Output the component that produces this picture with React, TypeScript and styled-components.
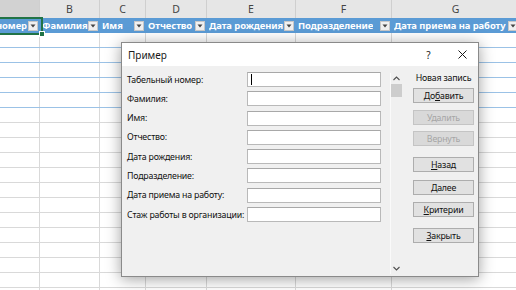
import styled, { createGlobalStyle } from 'styled-components'

const GlobalStyle = createGlobalStyle`
  html, body {
    margin: 0;
    padding: 0;
    background: #ffffff;
    overflow: hidden;
  }
`

const UI_FONT = `"Noto Sans", "Open Sans", "Liberation Sans", sans-serif`

const columns = [
  { letter: '', title: 'Табельный номер', width: 40, clipLeft: true },
  { letter: 'B', title: 'Фамилия', width: 60 },
  { letter: 'C', title: 'Имя', width: 46 },
  { letter: 'D', title: 'Отчество', width: 61 },
  { letter: 'E', title: 'Дата рождения', width: 89 },
  { letter: 'F', title: 'Подразделение', width: 96 },
  { letter: 'G', title: 'Дата приема на работу', width: 128 },
]

const fields = [
  'Табельный номер:',
  'Фамилия:',
  'Имя:',
  'Отчество:',
  'Дата рождения:',
  'Подразделение:',
  'Дата приема на работу:',
  'Стаж работы в организации:',
]

const buttons = [
  { pre: 'До', key: 'б', post: 'авить', gap: 4 },
  { pre: 'Удалить', key: '', post: '', gap: 7, disabled: true },
  { pre: 'Вернуть', key: '', post: '', gap: 6, disabled: true },
  { pre: '', key: 'Н', post: 'азад', gap: 11 },
  { pre: '', key: 'Д', post: 'алее', gap: 8 },
  { pre: '', key: 'К', post: 'ритерии', gap: 7 },
  { pre: '', key: 'З', post: 'акрыть', gap: 11 },
]

const Sheet = styled.div`
  position: relative;
  width: 516px;
  height: 290px;
  overflow: hidden;
  background: #ffffff;
`

const LettersRow = styled.div`
  display: flex;
  height: 18px;
  background: #e6e6e6;
`

const LetterCell = styled.div<{ $w: number; $selected?: boolean }>`
  flex: none;
  width: ${(p) => p.$w}px;
  box-sizing: border-box;
  border-right: 1px solid #cfcfcf;
  background: ${(p) => (p.$selected ? '#d2d2d2' : '#e6e6e6')};
  display: flex;
  align-items: center;
  justify-content: center;
  font-family: ${UI_FONT};
  font-size: 10.5px;
  color: #444444;
`

const HeaderRow = styled.div`
  display: flex;
  height: 15px;
  background: #5b9bd5;
`

const HeaderCell = styled.div<{ $w: number; $clipLeft?: boolean }>`
  flex: none;
  width: ${(p) => p.$w}px;
  box-sizing: border-box;
  display: flex;
  align-items: center;
  justify-content: ${(p) => (p.$clipLeft ? 'flex-end' : 'flex-start')};
  padding: 0 2px 0 2px;
  overflow: hidden;
`

const HeaderText = styled.span<{ $clipLeft?: boolean }>`
  flex: ${(p) => (p.$clipLeft ? 'none' : '0 1 auto')};
  min-width: 0;
  overflow: hidden;
  white-space: nowrap;
  font-family: ${UI_FONT};
  font-size: 9.4px;
  font-weight: 700;
  letter-spacing: -0.05px;
  color: #ffffff;
  line-height: 15px;
`

const FilterButton = styled.span<{ $clipLeft?: boolean }>`
  flex: none;
  margin-left: ${(p) => (p.$clipLeft ? '1px' : 'auto')};
  width: 10px;
  height: 10px;
  box-sizing: border-box;
  background: #f0f0f0;
  border: 1px solid #c8c8c8;
  display: flex;
  align-items: center;
  justify-content: center;
`

const DataRow = styled.div<{ $table?: boolean }>`
  display: flex;
  height: 15px;
  box-sizing: border-box;
  border-bottom: 1px solid ${(p) => (p.$table ? '#9bc2e6' : '#d9d9d9')};
`

const DataCell = styled.div<{ $w: number }>`
  flex: none;
  width: ${(p) => p.$w}px;
  box-sizing: border-box;
  border-right: 1px solid #d9d9d9;
`

const Selection = styled.div`
  position: absolute;
  left: -2px;
  top: 17px;
  width: 41px;
  height: 14px;
  border: 2px solid #217346;
  pointer-events: none;

  &::after {
    content: '';
    position: absolute;
    right: -4px;
    bottom: -4px;
    width: 4px;
    height: 4px;
    background: #217346;
    border: 1px solid #ffffff;
  }
`

const Dialog = styled.div`
  position: absolute;
  left: 121px;
  top: 42px;
  width: 358px;
  height: 235px;
  box-sizing: border-box;
  border: 1px solid #8a8a8a;
  background: #f0f0f0;
  box-shadow: 0 2px 14px rgba(0, 0, 0, 0.38);
  display: flex;
  flex-direction: column;
  font-family: ${UI_FONT};
  font-size: 8.8px;
  letter-spacing: -0.2px;
  color: #111111;
`

const TitleBar = styled.div`
  flex: none;
  height: 23px;
  background: #ffffff;
  display: flex;
  align-items: center;
  padding-left: 6px;
  font-size: 10px;
  letter-spacing: 0;
  color: #1a1a1a;
`

const TitleText = styled.span`
  flex: 1;
`

const TitleIcon = styled.span<{ $w: number }>`
  flex: none;
  width: ${(p) => p.$w}px;
  display: flex;
  align-items: center;
  justify-content: center;
  font-size: 10px;
`

const Body = styled.div`
  flex: 1;
  display: flex;
  padding: 6px 4px 2px 5px;
`

const Fields = styled.div`
  flex: none;
  display: grid;
  grid-template-columns: 120px 134px;
  grid-auto-rows: 15px;
  row-gap: 4.3px;
  align-content: start;
`

const Label = styled.div`
  display: flex;
  align-items: center;
  white-space: nowrap;
`

const Input = styled.div`
  box-sizing: border-box;
  background: #ffffff;
  border: 1px solid #b9b9b9;
  border-top-color: #a8a8a8;
  display: flex;
  align-items: center;
  padding-left: 3px;
`

const Caret = styled.span`
  width: 1px;
  height: 11px;
  background: #000000;
`

const ScrollTrack = styled.div`
  flex: none;
  width: 12px;
  margin: 1px 0 0 9px;
  box-sizing: border-box;
  border-left: 1px solid #fafafa;
  display: flex;
  flex-direction: column;
  align-items: center;
`

const ScrollArrow = styled.span`
  flex: none;
  height: 11px;
  display: flex;
  align-items: center;
  justify-content: center;
`

const ScrollThumb = styled.span`
  flex: none;
  width: 11px;
  height: 13px;
  background: #cdcdcd;
`

const ScrollSpace = styled.span`
  flex: 1;
`

const Side = styled.div`
  flex: none;
  width: 61px;
  margin-left: 11px;
  display: flex;
  flex-direction: column;
`

const Caption = styled.div`
  height: 12px;
  display: flex;
  align-items: center;
  justify-content: center;
  white-space: nowrap;
`

const Button = styled.div<{ $gap: number; $disabled?: boolean }>`
  flex: none;
  height: 15px;
  margin-top: ${(p) => p.$gap}px;
  box-sizing: border-box;
  border: 1px solid ${(p) => (p.$disabled ? '#c4c4c4' : '#adadad')};
  background: ${(p) => (p.$disabled ? '#d9d9d9' : '#e1e1e1')};
  color: ${(p) => (p.$disabled ? '#a6a6a6' : '#111111')};
  display: flex;
  align-items: center;
  justify-content: center;
  white-space: nowrap;

  u {
    text-decoration: underline;
    text-underline-offset: 1px;
  }
`

function Triangle() {
  return (
    <svg width="6" height="4" viewBox="0 0 6 4">
      <path d="M0.5 0.5 L5.5 0.5 L3 3.5 Z" fill="#444444" />
    </svg>
  )
}

function Chevron({ up }: { up?: boolean }) {
  return (
    <svg width="7" height="5" viewBox="0 0 7 5">
      <path
        d={up ? 'M0.5 4 L3.5 1 L6.5 4' : 'M0.5 1 L3.5 4 L6.5 1'}
        fill="none"
        stroke="#505050"
        strokeWidth="1.1"
      />
    </svg>
  )
}

export default function App() {
  const rows = Array.from({ length: 18 }, (_, i) => i)
  return (
    <>
      <GlobalStyle />
      <Sheet>
        <LettersRow>
          {columns.map((c, i) => (
            <LetterCell key={i} $w={c.width} $selected={i === 0}>
              {c.letter}
            </LetterCell>
          ))}
        </LettersRow>
        <HeaderRow>
          {columns.map((c, i) => (
            <HeaderCell key={i} $w={c.width} $clipLeft={c.clipLeft}>
              <HeaderText $clipLeft={c.clipLeft}>{c.title}</HeaderText>
              <FilterButton $clipLeft={c.clipLeft}>
                <Triangle />
              </FilterButton>
            </HeaderCell>
          ))}
        </HeaderRow>
        {rows.map((r) => (
          <DataRow key={r} $table={r < 5}>
            {columns.map((c, i) => (
              <DataCell key={i} $w={c.width} />
            ))}
          </DataRow>
        ))}
        <Selection />

        <Dialog>
          <TitleBar>
            <TitleText>Пример</TitleText>
            <TitleIcon $w={35}>?</TitleIcon>
            <TitleIcon $w={32}>
              <svg width="9" height="9" viewBox="0 0 9 9">
                <path d="M0.5 0.5 L8.5 8.5 M8.5 0.5 L0.5 8.5" stroke="#1a1a1a" strokeWidth="1" />
              </svg>
            </TitleIcon>
          </TitleBar>
          <Body>
            <Fields>
              {fields.map((f, i) => [
                <Label key={`l${i}`}>{f}</Label>,
                <Input key={`i${i}`}>{i === 0 && <Caret />}</Input>,
              ])}
            </Fields>
            <ScrollTrack>
              <ScrollArrow>
                <Chevron up />
              </ScrollArrow>
              <ScrollThumb />
              <ScrollSpace />
              <ScrollArrow>
                <Chevron />
              </ScrollArrow>
            </ScrollTrack>
            <Side>
              <Caption>Новая запись</Caption>
              {buttons.map((b, i) => (
                <Button key={i} $gap={b.gap} $disabled={b.disabled}>
                  {b.pre}
                  {b.key && <u>{b.key}</u>}
                  {b.post}
                </Button>
              ))}
            </Side>
          </Body>
        </Dialog>
      </Sheet>
    </>
  )
}
